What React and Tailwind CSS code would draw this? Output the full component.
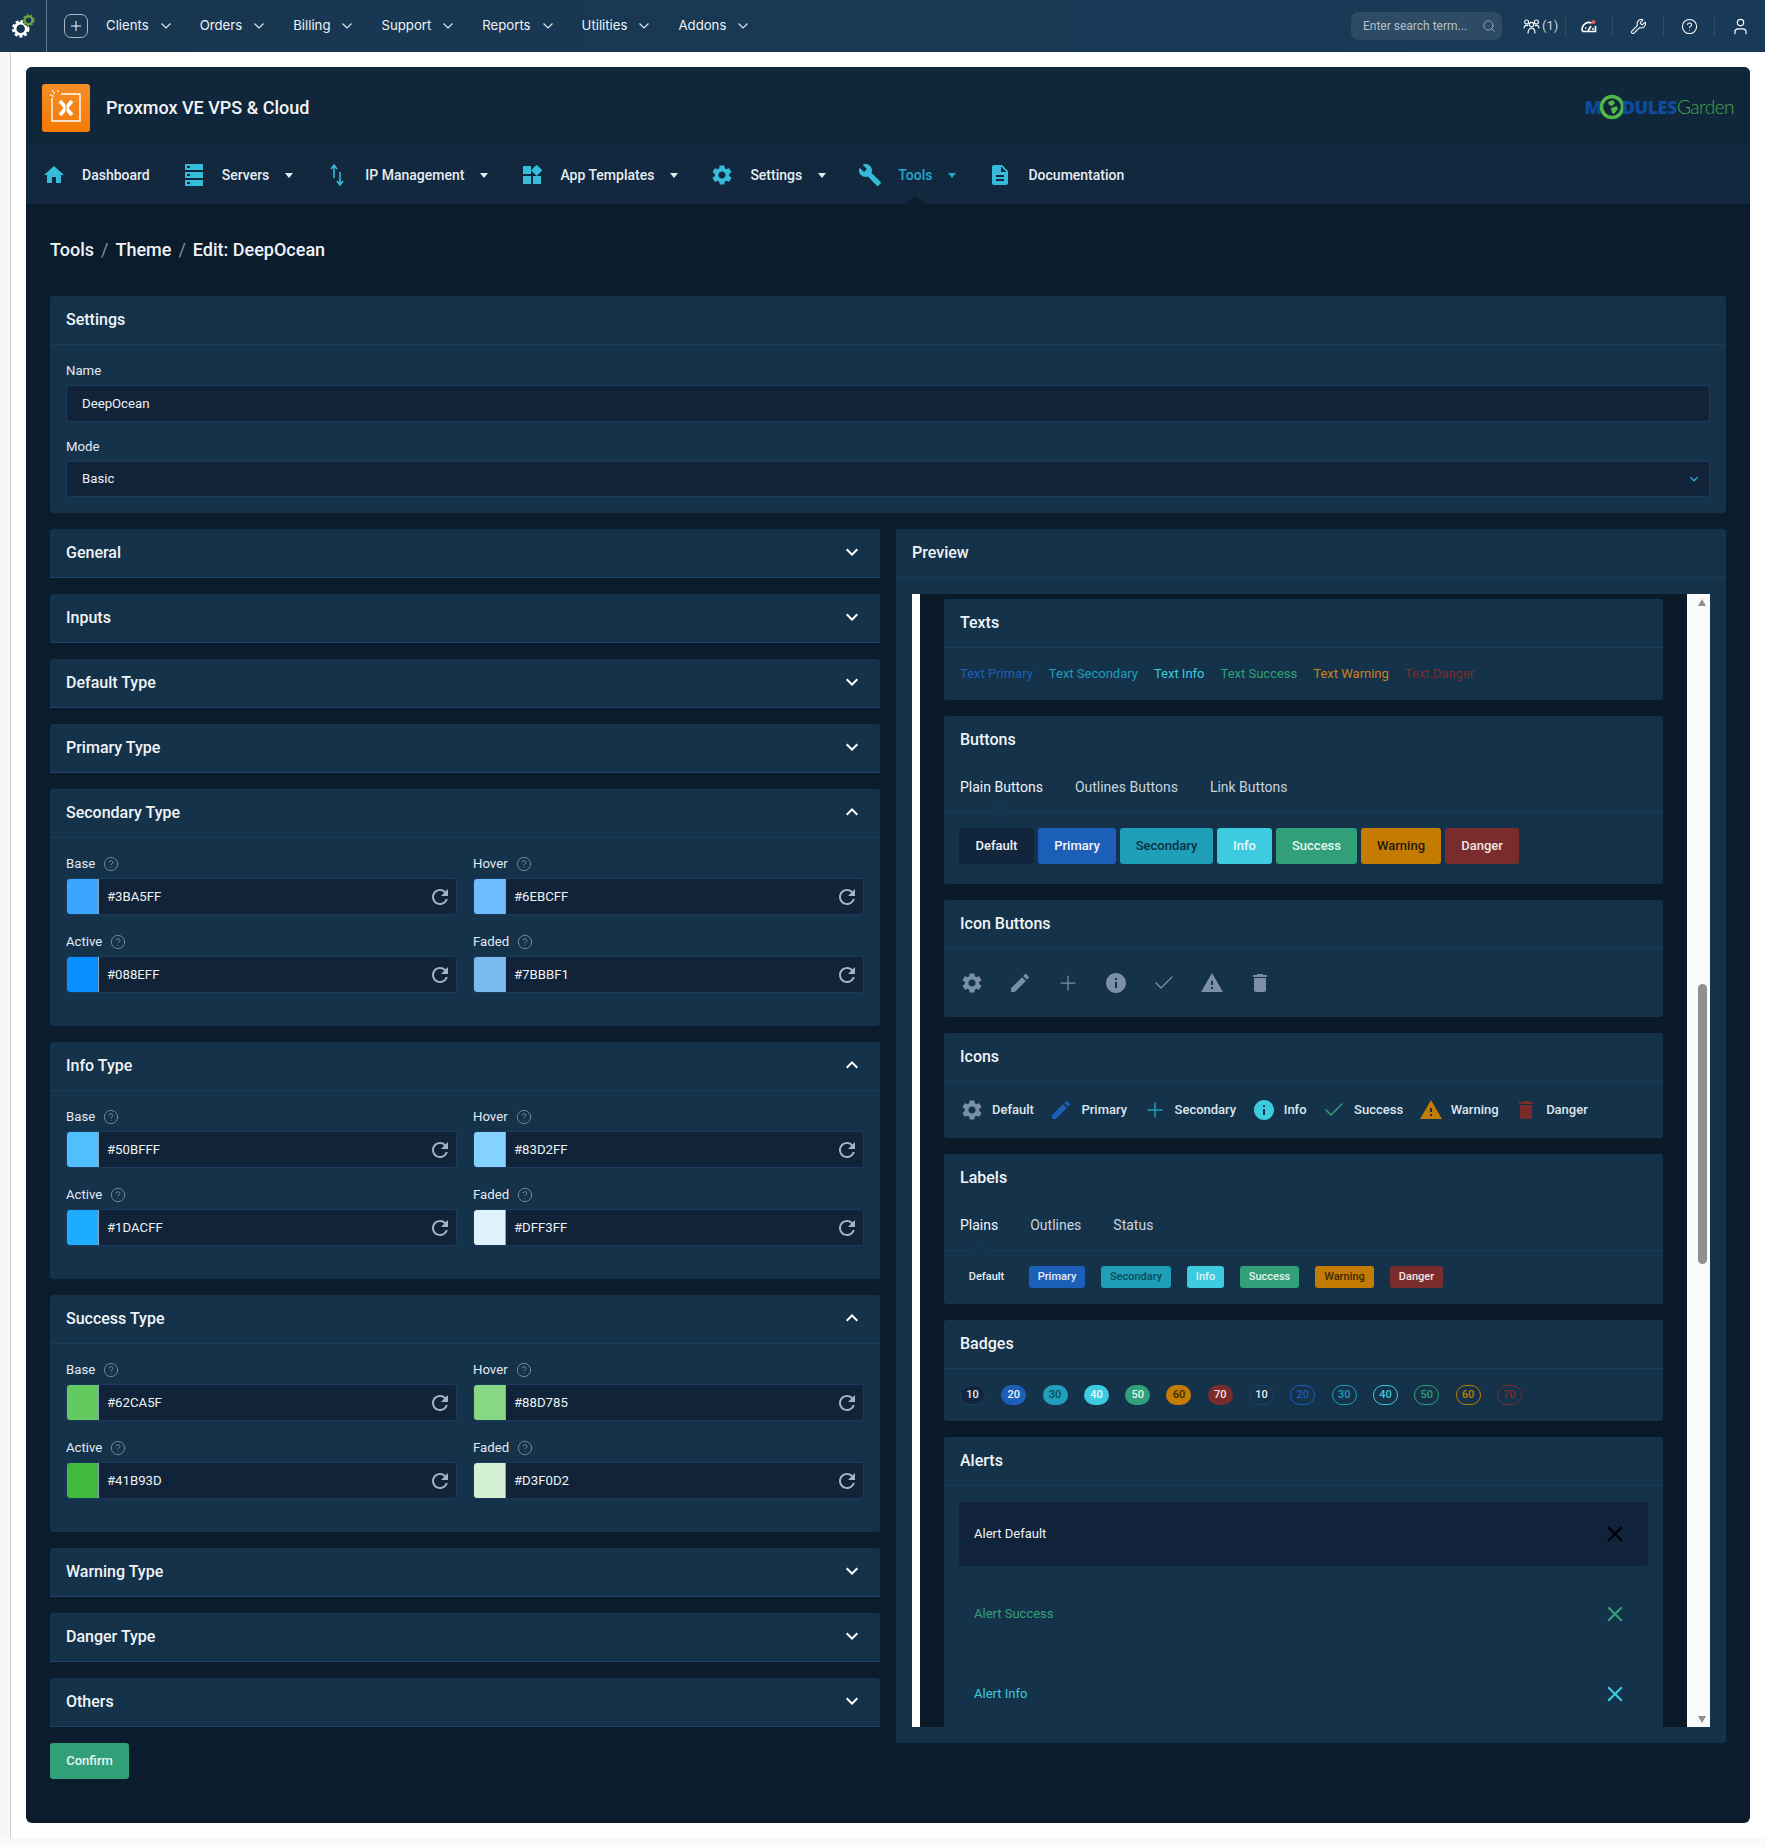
import React from 'react';
import { Plus, Check, Search, Wrench, CircleHelp, User } from 'lucide-react';
import {
  MdHome, MdWidgets, MdSettings, MdBuild, MdDescription, MdEdit, MdInfo,
  MdWarning, MdDelete, MdRefresh, MdClose, MdExpandMore, MdExpandLess,
} from 'react-icons/md';

const topLinks = ['Clients', 'Orders', 'Billing', 'Support', 'Reports', 'Utilities', 'Addons'];

const navItems = [
  { label: 'Dashboard', icon: <MdHome size={26} /> },
  { label: 'Servers', icon: <ServerIcon />, caret: true },
  { label: 'IP Management', icon: <IpArrows />, caret: true },
  { label: 'App Templates', icon: <MdWidgets size={26} />, caret: true },
  { label: 'Settings', icon: <MdSettings size={26} />, caret: true },
  { label: 'Tools', icon: <MdBuild size={26} />, caret: true, active: true },
  { label: 'Documentation', icon: <MdDescription size={26} /> },
];

function ServerIcon() {
  return (
    <svg width="20" height="24" viewBox="0 0 20 24" fill="currentColor">
      <path d="M1 1h18v6H1zM1 9h18v6H1zM1 17h18v6H1z" />
      <path d="M3 3h3v2H3zM3 11h3v2H3zM3 19h3v2H3z" fill="#11283e" />
    </svg>
  );
}

function IpArrows() {
  return (
    <svg width="16" height="24" viewBox="0 0 16 24" fill="none" stroke="currentColor" strokeWidth="1.6">
      <path d="M5 15V3M2 6l3-4 3 4" />
      <path d="M11 9v12M8 18l3 4 3-4" />
    </svg>
  );
}

function LogoMark() {
  return (
    <svg width="48" height="48" viewBox="0 0 48 48" fill="none">
      <path d="M10 14v23h28V10H19" stroke="#fff" strokeWidth="1.4" />
      <path d="M8 11h1.600M11.500 9h1.600M15 7h1.600M10 7h1.600M10 12h1.600" stroke="#fff" strokeWidth="1.5" />
      <path d="M18 17l12 14M30 17L18 31" stroke="#fff" strokeWidth="3.600" />
      <path d="M24 19v10" stroke="#f58418" strokeWidth="1" />
    </svg>
  );
}

function TopGear() {
  return (
    <svg width="27" height="27" viewBox="0 0 24 24" fill="none">
      <circle cx="9.500" cy="14" r="6" stroke="#fff" strokeWidth="3.600" strokeDasharray="2.400 1.600" />
      <circle cx="9.500" cy="14" r="5" stroke="#fff" strokeWidth="2.400" />
      <circle cx="16" cy="7" r="4.600" fill="#183852" />
      <circle cx="16.500" cy="6.500" r="4" stroke="#6ba53b" strokeWidth="2.600" strokeDasharray="1.800 1" />
      <circle cx="16.500" cy="6.500" r="3.400" stroke="#6ba53b" strokeWidth="1.600" />
    </svg>
  );
}

function UsersIcon() {
  return (
    <svg width="17" height="17" viewBox="0 0 17 17" fill="none" stroke="#fff" strokeWidth="1.100">
      <circle cx="3.600" cy="4" r="2" />
      <circle cx="13.400" cy="4" r="2" />
      <circle cx="8.500" cy="6.600" r="2.200" />
      <path d="M1 10.400c0-2 1-3 2.600-3 .7 0 1.200.2 1.600.5M16 10.400c0-2-1-3-2.600-3-.7 0-1.200.2-1.600.5" />
      <path d="M5 15.500c0-3 1.300-5.400 3.500-5.400S12 12.500 12 15.500" />
    </svg>
  );
}

function GaugeIcon() {
  return (
    <svg width="16" height="14" viewBox="0 0 16 14" fill="none">
      <path d="M1.500 12.500a6.800 6.800 0 0 1 9-8.500M14.500 7v5.500h-13" stroke="#fff" strokeWidth="1.600" />
      <path d="M7 12l3-5" stroke="#fff" strokeWidth="1.600" />
      <path d="M4 9h1.500M11 10h2" stroke="#fff" strokeWidth="1.300" />
      <circle cx="12.500" cy="3" r="2" fill="#ef5a5a" />
    </svg>
  );
}

function GlobeRing() {
  return (
    <svg width="26" height="26" viewBox="0 0 26 26" className="mx-[-3px] shrink-0">
      <circle cx="13" cy="13" r="10.500" fill="#10263b" stroke="#4fb848" strokeWidth="3.500" />
      <path d="M9 8l5-2 2 3-3 3-3-1zM12 14l6-2 1 3-4 5-2-1z" fill="#4fb848" />
    </svg>
  );
}

function Caret({ className }) {
  return <span className={`w-0 h-0 border-x-4 border-t-[5px] border-x-transparent ${className}`} />;
}

function SectionHeader({ title, open, chevron = true }) {
  return (
    <div className="h-[48px] flex items-center justify-between px-4">
      <span className="text-[16px] font-medium text-[#f1f4f7]">{title}</span>
      {chevron && (open ? <MdExpandLess size={24} className="text-white -mt-[2px]" /> : <MdExpandMore size={24} className="text-white -mt-[2px]" />)}
    </div>
  );
}

function ColorField({ label, value }) {
  return (
    <div className="mb-[17px]">
      <div className="h-5 mb-1 flex items-center gap-2 text-[13.200px] text-[#e4eaf0]">
        {label}
        <CircleHelp size={16} strokeWidth={1.25} className="text-[#8296a8]" />
      </div>
      <div className="h-[37px] flex items-center rounded-[3px] border border-[#1c3a5e] bg-[#102339]">
        <span className="w-8 h-full rounded-l-[3px] border-r border-[#8ea4b8]" style={{ backgroundColor: value }} />
        <span className="ml-2 flex-1 text-[13.200px] text-[#eef2f6]">{value}</span>
        <MdRefresh size={24} className="mr-1 text-[#a3b3c1]" />
      </div>
    </div>
  );
}

function TypePanel({ title, colors }) {
  return (
    <div className="rounded-[3px] bg-[#14324a]">
      <div className="border-b border-[#1c3a5e]">
        <SectionHeader title={title} open />
      </div>
      <div className="grid grid-cols-2 gap-x-4 px-4 pt-4 pb-[16px]">
        {colors.map(c => <ColorField key={c[0]} label={c[0]} value={c[1]} />)}
      </div>
    </div>
  );
}

function ClosedPanel({ title }) {
  return (
    <div className="rounded-t-[3px] bg-[#14324a] border-b border-[#1f4170]">
      <SectionHeader title={title} />
    </div>
  );
}

function PreviewCard({ title, children, plain }) {
  return (
    <div className="rounded-[3px] bg-[#14324a] mb-4 shrink-0">
      <div className={`h-[49px] flex items-center px-4 text-[16px] font-medium text-[#f1f4f7] ${plain ? 'pb-[2px]' : 'border-b border-[#1c3a5e]'}`}>{title}</div>
      {children}
    </div>
  );
}

function Tabs({ items, notch }) {
  return (
    <div className="relative h-[48px] flex items-center gap-8 px-4 pb-[2px] border-b border-[#1c3a5e] text-[14px] text-[#c9d4de]">
      {items.map((t, i) => <span key={t} className={i === 0 ? 'text-[#eef2f6]' : ''}>{t}</span>)}
      <span className={`absolute bottom-[-5px] w-[11px] h-[11px] rotate-45 border-l border-t border-[#1c3a5e] bg-[#14324a] ${notch}`} />
    </div>
  );
}

const buttons = [
  ['Default', 'bg-[#11263c] text-[#eef2f6] w-[75px]'],
  ['Primary', 'bg-[#1c5fb9] text-[#f2f6fb] w-[78px]'],
  ['Secondary', 'bg-[#1f9fb8] text-[#0b2f3f] w-[93px]'],
  ['Info', 'bg-[#3ccbdf] text-[#e4f8fb] w-[55px]'],
  ['Success', 'bg-[#31a078] text-[#e6f6f0] w-[81px]'],
  ['Warning', 'bg-[#c47b02] text-[#1f1a0c] w-[80px]'],
  ['Danger', 'bg-[#7a2c2c] text-[#f4e4e4] w-[74px]'],
];

const labels = [
  ['Default', 'text-[#e8edf2] w-[53px]'],
  ['Primary', 'bg-[#1c5fb9] text-[#e6eef8] w-[56px]'],
  ['Secondary', 'bg-[#1f9fb8] text-[#0e4a5a] w-[70px]'],
  ['Info', 'bg-[#3ccbdf] text-[#dff6fa] w-[37px]'],
  ['Success', 'bg-[#31a078] text-[#e0f4ec] w-[59px]'],
  ['Warning', 'bg-[#c47b02] text-[#3a2806] w-[59px]'],
  ['Danger', 'bg-[#7a2c2c] text-[#f4e4e4] w-[53px]'],
];

const badges = [
  ['10', 'bg-[#11263c] border border-[#1c3a5e] text-[#e8edf2]'],
  ['20', 'bg-[#1c5fb9] text-[#f2f6fb]'],
  ['30', 'bg-[#1f9fb8] text-[#0e4a5a]'],
  ['40', 'bg-[#3ccbdf] text-[#eafafc]'],
  ['50', 'bg-[#31a078] text-[#e6f6f0]'],
  ['60', 'bg-[#c47b02] text-[#3a2806]'],
  ['70', 'bg-[#7a2c2c] text-[#f4e4e4]'],
  ['10', 'border border-[#1f4170] text-[#e8edf2]'],
  ['20', 'border border-[#1c5fb9] text-[#1c5fb9]'],
  ['30', 'border border-[#1f9fb8] text-[#1f9fb8]'],
  ['40', 'border border-[#3ccbdf] text-[#3ccbdf]'],
  ['50', 'border border-[#31a078] text-[#31a078]'],
  ['60', 'border border-[#c47b02] text-[#c47b02]'],
  ['70', 'border border-[#7a2c2c] text-[#7a2c2c]'],
];

const secondaryColors = [['Base', '#3BA5FF'], ['Hover', '#6EBCFF'], ['Active', '#088EFF'], ['Faded', '#7BBBF1']];
const infoColors = [['Base', '#50BFFF'], ['Hover', '#83D2FF'], ['Active', '#1DACFF'], ['Faded', '#DFF3FF']];
const successColors = [['Base', '#62CA5F'], ['Hover', '#88D785'], ['Active', '#41B93D'], ['Faded', '#D3F0D2']];

const iconButton = 'text-[#7b8fa6]';

export default function App() {
  return (
    <div className="min-h-[1847px] bg-white [font-family:Roboto,sans-serif]">
      {/* Top bar */}
      <div className="h-[52px] flex items-center bg-gradient-to-r from-[#183650] to-[#183a58] text-white">
        <div className="w-[47px] h-full flex items-center justify-center border-r border-[#5f7890]">
          <TopGear />
        </div>
        <div className="ml-[17px] w-6 h-6 flex items-center justify-center rounded-[7px] border border-[#a9b6c2]">
          <Plus size={16} strokeWidth={1.5} />
        </div>
        <div className="ml-[18px] flex items-center gap-[29px] [font-family:Inter,sans-serif] text-[13.200px] text-[#eef3f7]">
          {topLinks.map(l => (
            <span key={l} className="flex items-center gap-3">
              {l}
              <svg width="10" height="6" viewBox="0 0 10 6" fill="none" stroke="#dfe6ec" strokeWidth="1.200"><path d="M.5.5 5 5l4.500-4.500" /></svg>
            </span>
          ))}
        </div>
        <div className="ml-auto flex items-center">
          <div className="w-[151px] h-[28px] mr-[21px] flex items-center justify-between pl-3 pr-[6px] rounded-lg bg-[#2d4b64] text-[12px] text-[#b4c1cc]">
            Enter search term...
            <Search size={14} strokeWidth={1.25} />
          </div>
          <div className="w-[42px] flex items-center gap-[2px] text-[13px] text-[#c6d1da]">
            <UsersIcon />(1)
          </div>
          <div className="w-[47px] h-5 flex items-center justify-center border-l border-[#2f4e69]"><GaugeIcon /></div>
          <div className="w-[51px] h-5 flex items-center justify-center border-l border-[#2f4e69]"><Wrench size={17} strokeWidth={1.5} /></div>
          <div className="w-[51px] h-5 flex items-center justify-center border-l border-[#2f4e69]"><CircleHelp size={17} strokeWidth={1.5} /></div>
          <div className="w-[51px] h-5 flex items-center justify-center border-l border-[#2f4e69]"><User size={19} strokeWidth={1.5} /></div>
        </div>
      </div>

      <div className="flex">
        <div className="w-[11px] bg-[#f6f6f6] border-r border-[#cfcfcf]" />
        <div className="flex-1 pl-[15px] pr-[15px] pt-[15px] pb-[15px]">
          <div className="h-[1756px] rounded-[6px] bg-[#0b1c2c] overflow-hidden">
            {/* Module header */}
            <div className="bg-[#10263b]">
              <div className="h-[81px] flex items-center justify-between pl-4 pr-4">
                <div className="flex items-center gap-4">
                  <div className="rounded-[3px] bg-gradient-to-b from-[#f68d25] to-[#f47a00]"><LogoMark /></div>
                  <span className="text-[18px] font-medium text-[#f2f5f8]">Proxmox VE VPS &amp; Cloud</span>
                </div>
                <div className="mb-[2px] flex items-center [font-family:'Open_Sans',sans-serif] text-[18px] leading-none">
                  <span className="font-extrabold text-[#0d4c9c]">M</span>
                  <GlobeRing />
                  <span className="font-extrabold text-[#0d4c9c] tracking-[-0.5px]">DULES</span>
                  <span className="[font-family:Lato,sans-serif] font-light text-[#45a84a] tracking-[-0.5px] text-[19px]">Garden</span>
                </div>
              </div>
              <div className="relative h-[56px] pb-[2px] flex items-center gap-8 pl-4 bg-[#11283e]">
                {navItems.map(item => (
                  <div key={item.label} className="flex items-center">
                    <span className="w-6 flex justify-center text-[#36bcd8]">{item.icon}</span>
                    <span className={`ml-4 text-[14px] font-medium ${item.active ? 'text-[#22a8d0]' : 'text-[#e6eef4]'}`}>{item.label}</span>
                    {item.caret && <Caret className={`ml-4 ${item.active ? 'border-t-[#22a8d0]' : 'border-t-[#e6eef4]'}`} />}
                  </div>
                ))}
                <span className="absolute left-[879px] bottom-0 w-0 h-0 border-x-[10px] border-b-[8px] border-x-transparent border-b-[#0b1c2c]" />
              </div>
            </div>

            <div className="px-6">
              <div className="h-6 mt-[33px] mb-[35px] flex items-center gap-[7px] text-[18px] font-medium text-[#f0f3f6]">
                <span>Tools</span><span className="font-normal text-[#7f91a2]">/</span>
                <span>Theme</span><span className="font-normal text-[#7f91a2]">/</span>
                <span>Edit: DeepOcean</span>
              </div>

              {/* Settings */}
              <div className="rounded-[3px] bg-[#14324a]">
                <div className="border-b border-[#1c3a5e]"><SectionHeader title="Settings" chevron={false} /></div>
                <div className="px-4 pt-4 pb-4">
                  <div className="h-5 mb-1 flex items-center text-[13.200px] text-[#e4eaf0]">Name</div>
                  <div className="h-[37px] mb-[15px] flex items-center px-[15px] rounded-[3px] border border-[#1c3a5e] bg-[#102339] text-[13.200px] text-[#eef2f6]">DeepOcean</div>
                  <div className="h-5 mb-1 flex items-center text-[13.200px] text-[#e4eaf0]">Mode</div>
                  <div className="h-[36px] flex items-center justify-between pl-[15px] pr-[7px] rounded-[3px] border border-[#1c3a5e] bg-[#102339] text-[13.200px] text-[#eef2f6]">
                    Basic
                    <MdExpandMore size={16} className="text-[#36a5d8]" />
                  </div>
                </div>
              </div>

              <div className="mt-4 grid grid-cols-2 gap-4 items-start">
                {/* Left column */}
                <div className="flex flex-col gap-4">
                  <ClosedPanel title="General" />
                  <ClosedPanel title="Inputs" />
                  <ClosedPanel title="Default Type" />
                  <ClosedPanel title="Primary Type" />
                  <TypePanel title="Secondary Type" colors={secondaryColors} />
                  <TypePanel title="Info Type" colors={infoColors} />
                  <TypePanel title="Success Type" colors={successColors} />
                  <ClosedPanel title="Warning Type" />
                  <ClosedPanel title="Danger Type" />
                  <ClosedPanel title="Others" />
                  <div>
                    <button className="w-[79px] h-9 rounded-[3px] bg-[#31a078] text-[13px] font-medium text-[#e6f6f0]">Confirm</button>
                  </div>
                </div>

                {/* Preview */}
                <div className="h-[1214px] rounded-[3px] bg-[#14324a] flex flex-col">
                  <div className="border-b border-[#1c3a5e]"><SectionHeader title="Preview" chevron={false} /></div>
                  <div className="mx-4 mt-4 h-[1133px] flex overflow-hidden">
                    <div className="w-2 bg-white shrink-0" />
                    <div className="flex-1 bg-[#0a1a29] px-6 pt-[5px] flex flex-col overflow-hidden">
                      <PreviewCard title="Texts">
                        <div className="h-[52px] flex items-center gap-[16px] px-4 text-[13px]">
                          <span className="text-[#1c5fb9]">Text Primary</span>
                          <span className="text-[#1f9fb8]">Text Secondary</span>
                          <span className="text-[#3ccbdf]">Text Info</span>
                          <span className="text-[#31a078]">Text Success</span>
                          <span className="text-[#d0801a]">Text Warning</span>
                          <span className="text-[#7a2c2c]">Text Danger</span>
                        </div>
                      </PreviewCard>

                      <PreviewCard title="Buttons" plain>
                        <Tabs items={['Plain Buttons', 'Outlines Buttons', 'Link Buttons']} notch="left-[50px]" />
                        <div className="flex gap-1 pl-[15px] pt-[15px] pb-5">
                          {buttons.map(b => (
                            <span key={b[0]} className={`h-9 flex items-center justify-center rounded-[3px] text-[13px] font-medium ${b[1]}`}>{b[0]}</span>
                          ))}
                        </div>
                      </PreviewCard>

                      <PreviewCard title="Icon Buttons">
                        <div className="h-[68px] flex items-center pl-4">
                          <span className="w-12 flex justify-start"><MdSettings size={24} className={iconButton} /></span>
                          <span className="w-12 flex justify-start"><MdEdit size={24} className={iconButton} /></span>
                          <span className="w-12 flex justify-start"><Plus size={24} strokeWidth={1.25} className={iconButton} /></span>
                          <span className="w-12 flex justify-start"><MdInfo size={24} className={iconButton} /></span>
                          <span className="w-12 flex justify-start"><Check size={24} strokeWidth={1.25} className={iconButton} /></span>
                          <span className="w-12 flex justify-start"><MdWarning size={24} className={iconButton} /></span>
                          <span className="w-12 flex justify-start"><MdDelete size={24} className={iconButton} /></span>
                        </div>
                      </PreviewCard>

                      <PreviewCard title="Icons">
                        <div className="h-[56px] flex items-center gap-[15.500px] pl-4 text-[13px] font-medium text-[#dfe6ec]">
                          <span className="flex items-center gap-2"><MdSettings size={24} className="text-[#7b8fa6]" />Default</span>
                          <span className="flex items-center gap-2"><MdEdit size={24} className="text-[#1c5fb9]" />Primary</span>
                          <span className="flex items-center gap-2"><Plus size={24} strokeWidth={1.5} className="text-[#1f9fb8]" />Secondary</span>
                          <span className="flex items-center gap-2"><MdInfo size={24} className="text-[#3ccbdf]" />Info</span>
                          <span className="flex items-center gap-2"><Check size={24} strokeWidth={1.5} className="text-[#31a078]" />Success</span>
                          <span className="flex items-center gap-2"><MdWarning size={24} className="text-[#c47b02]" />Warning</span>
                          <span className="flex items-center gap-2"><MdDelete size={24} className="text-[#7a2c2c]" />Danger</span>
                        </div>
                      </PreviewCard>

                      <PreviewCard title="Labels" plain>
                        <Tabs items={['Plains', 'Outlines', 'Status']} notch="left-[30px]" />
                        <div className="flex gap-4 pl-4 pt-[15px] pb-4">
                          {labels.map(l => (
                            <span key={l[0]} className={`h-[22px] flex items-center justify-center rounded-[3px] text-[11px] font-medium ${l[1]}`}>{l[0]}</span>
                          ))}
                        </div>
                      </PreviewCard>

                      <PreviewCard title="Badges">
                        <div className="h-[52px] flex items-center gap-[16.300px] pl-4">
                          {badges.map((b, i) => (
                            <span key={i} className={`w-[25px] h-5 flex items-center justify-center rounded-full text-[11px] font-medium ${b[1]}`}>{b[0]}</span>
                          ))}
                        </div>
                      </PreviewCard>

                      <PreviewCard title="Alerts">
                        <div className="px-[15px] pt-4">
                          <div className="h-16 mb-4 flex items-center justify-between pl-[15px] pr-5 rounded-[3px] bg-[#10233a] text-[13px] text-[#eef2f6]">
                            Alert Default
                            <MdClose size={26} className="text-black" />
                          </div>
                          <div className="h-16 mb-4 flex items-center justify-between pl-[15px] pr-5 text-[13px] text-[#31a078]">
                            Alert Success
                            <MdClose size={26} />
                          </div>
                          <div className="h-16 mb-4 flex items-center justify-between pl-[15px] pr-5 text-[13px] text-[#3ccbdf]">
                            Alert Info
                            <MdClose size={26} />
                          </div>
                        </div>
                      </PreviewCard>
                    </div>
                    {/* Scrollbar */}
                    <div className="w-[23px] shrink-0 bg-[#fafafa] pl-[11px] pt-[5px]">
                      <div className="w-0 h-0 border-x-[4.500px] border-b-[7px] border-x-transparent border-b-[#8f8f8f]" />
                      <div className="mt-[378px] w-[9px] h-[280px] rounded-full bg-[#8f8f8f]" />
                      <div className="mt-[452px] w-0 h-0 border-x-[4.500px] border-t-[7px] border-x-transparent border-t-[#8f8f8f]" />
                    </div>
                  </div>
                </div>
              </div>
            </div>
          </div>
        </div>
      </div>
      <div className="h-[9px] bg-[#f9f9f9]" />
    </div>
  );
}
